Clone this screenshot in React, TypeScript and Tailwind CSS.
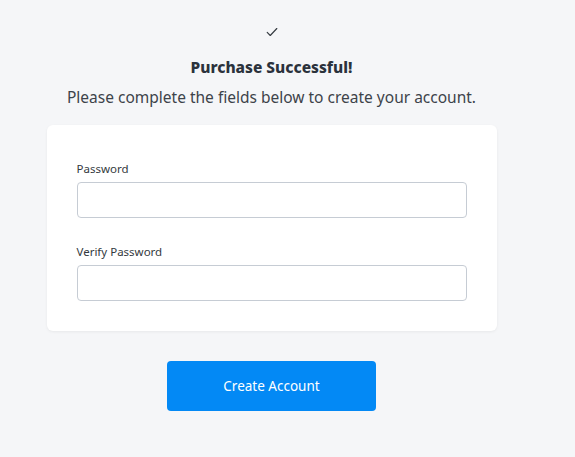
export default function App() {
  return (
    <div className="min-h-[457px] w-full bg-[#f5f6f8] font-['Noto_Sans',sans-serif] text-[#343a40]">
      <div className="flex w-[543px] flex-col items-center pt-[25px]">
        <svg viewBox="0 0 16 16" className="h-[14px] w-[14px] text-[#343a40]" fill="none" stroke="currentColor" strokeWidth="1.3" aria-hidden="true">
          <path d="M2.5 8.5l3.5 3.5 7.5-8" strokeLinecap="round" strokeLinejoin="round" />
        </svg>
        <h1 className="mt-[17px] text-[15.5px] font-extrabold leading-[22px] text-[#2b323c]">Purchase Successful!</h1>
        <p className="mt-[8px] text-[15.5px] leading-[22px] text-[#3d434a]">
          Please complete the fields below to create your account.
        </p>

        <form className="mt-[17px] flex w-[450px] flex-col gap-[26px] rounded-[6px] bg-white px-[30px] pb-[30px] pt-[36px] shadow-[0_1px_3px_rgba(0,0,0,0.06)]">
          <label className="flex flex-col">
            <span className="text-[11.5px] leading-[16px] text-[#343a40]">Password</span>
            <input type="password" className="mt-[5px] h-[36px] w-full rounded-[4px] border border-[#c6ccd4] bg-white px-3 text-[13px] outline-none" />
          </label>
          <label className="flex flex-col">
            <span className="text-[11.5px] leading-[16px] text-[#343a40]">Verify Password</span>
            <input type="password" className="mt-[5px] h-[36px] w-full rounded-[4px] border border-[#c6ccd4] bg-white px-3 text-[13px] outline-none" />
          </label>
        </form>

        <button type="button" className="mt-[30px] h-[50px] w-[209px] rounded-[4px] bg-[#0389f5] text-[13.5px] text-white">
          Create Account
        </button>
      </div>
    </div>
  );
}
